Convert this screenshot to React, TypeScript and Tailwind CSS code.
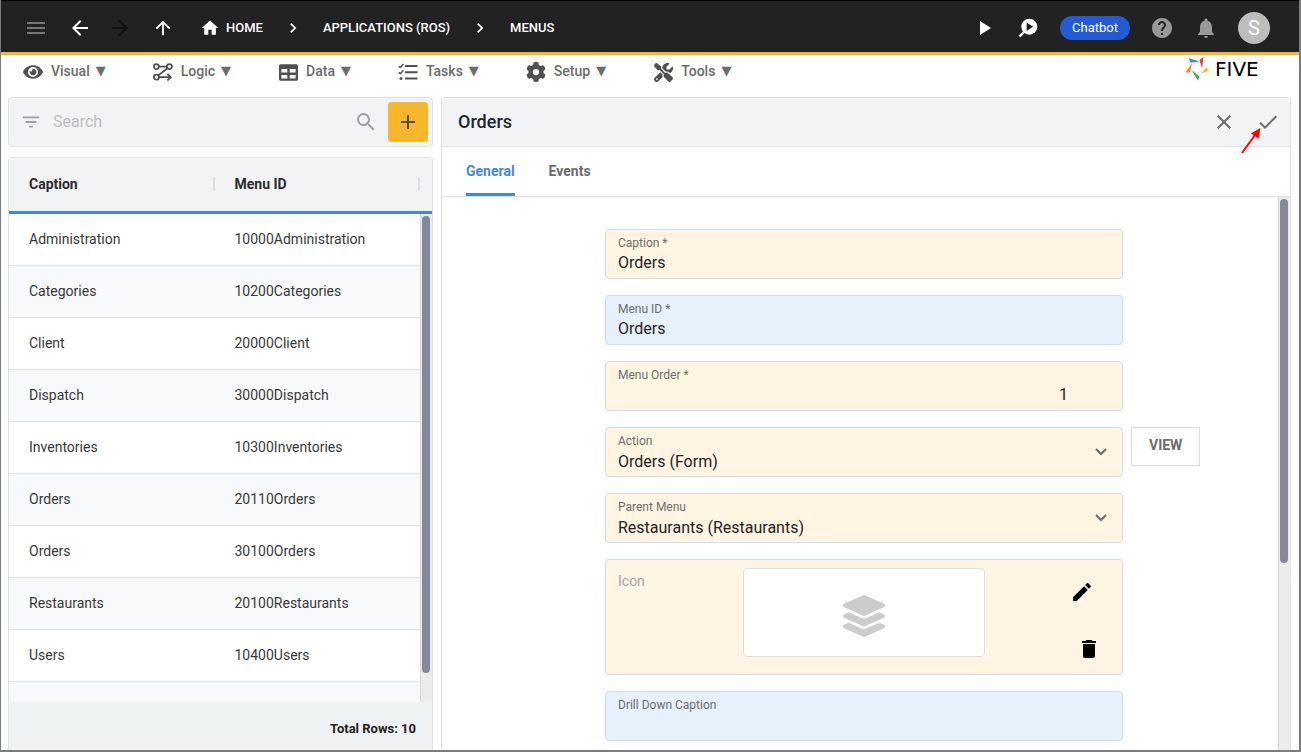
import React, { useState } from "react";
import {
  MdAdd,
  MdArrowBack,
  MdArrowForward,
  MdArrowUpward,
  MdCheck,
  MdChevronRight,
  MdClose,
  MdDelete,
  MdEdit,
  MdFilterList,
  MdHelp,
  MdHome,
  MdMenu,
  MdNotifications,
  MdPlayArrow,
  MdSearch,
} from "react-icons/md";
import { FaEye, FaLayerGroup, FaTable } from "react-icons/fa";
import { FaGear, FaScrewdriverWrench } from "react-icons/fa6";

const LogicIcon = () => (
  <svg
    viewBox="0 0 20 18"
    className="h-[18px] w-5"
    fill="none"
    stroke="currentColor"
    strokeWidth="1.8"
  >
    <circle cx="3.4" cy="3.6" r="2.5" />
    <circle cx="16.4" cy="3.6" r="2.5" />
    <circle cx="3.4" cy="14.2" r="2.5" />
    <path d="M6 3.600h8M14.400 5.300L5.400 12.400M6 14.200h11.500M14.400 11l3.400 3.200-3.400 3.200" />
  </svg>
);

const TasksIcon = () => (
  <svg
    viewBox="0 0 20 18"
    className="h-[18px] w-5"
    fill="none"
    stroke="currentColor"
  >
    <path d="M7 3h12.500M7 9.200h12.500M7 15.400h12.500" strokeWidth="2" />
    <path d="M.8 3l1.500 1.500L5.400 1M.8 9.200l1.500 1.500 3.100-3.500" strokeWidth="1.5" />
    <circle cx="3" cy="15.4" r="1.5" fill="currentColor" stroke="none" />
  </svg>
);

const DebugIcon = () => (
  <svg viewBox="0 0 20 20" className="size-5">
    <path d="M6.5 13.5L1.5 18.5" stroke="#fff" strokeWidth="2.4" />
    <circle cx="11.3" cy="8.7" r="8" fill="#fff" />
    <path d="M8.6 4.4v8.6l6.6-4.3z" fill="#222" />
  </svg>
);

const SelectArrow = () => (
  <svg
    viewBox="0 0 12 8"
    className="pointer-events-none absolute top-5 right-[15px] h-2 w-3"
    fill="none"
    stroke="#6b6b6b"
    strokeWidth="2"
  >
    <path d="M1 1l5 5 5-5" />
  </svg>
);

const menus = [
  { label: "Visual", icon: <FaEye size={20} /> },
  { label: "Logic", icon: <LogicIcon /> },
  { label: "Data", icon: <FaTable size={19} /> },
  { label: "Tasks", icon: <TasksIcon /> },
  { label: "Setup", icon: <FaGear size={20} /> },
  { label: "Tools", icon: <FaScrewdriverWrench size={19} /> },
];

const rows = [
  ["Administration", "10000Administration"],
  ["Categories", "10200Categories"],
  ["Client", "20000Client"],
  ["Dispatch", "30000Dispatch"],
  ["Inventories", "10300Inventories"],
  ["Orders", "20110Orders"],
  ["Orders", "30100Orders"],
  ["Restaurants", "20100Restaurants"],
  ["Users", "10400Users"],
  ["", ""],
];

const tabs = ["General", "Events"];

function Header() {
  return (
    <header className="flex h-[55px] shrink-0 items-center justify-between border-t border-b-3 border-t-black border-b-[#fbb829] bg-[#222] pt-0.5 pr-[29px] pl-[23px] text-[13px] font-medium text-white">
      <nav className="flex items-center">
        <button aria-label="Menu" className="text-[#757575]">
          <MdMenu size={24} />
        </button>
        <button aria-label="Back" className="ml-5">
          <MdArrowBack size={24} />
        </button>
        <button aria-label="Forward" className="ml-4 text-[#111]">
          <MdArrowForward size={24} />
        </button>
        <button aria-label="Up" className="ml-5">
          <MdArrowUpward size={22} />
        </button>
        <a href="#" className="ml-[26px] flex items-center gap-1.5">
          <MdHome size={20} />
          HOME
        </a>
        <MdChevronRight size={20} className="mx-5" />
        <a href="#">APPLICATIONS (ROS)</a>
        <MdChevronRight size={20} className="mx-5" />
        <a href="#">MENUS</a>
      </nav>
      <div className="flex items-center">
        <button aria-label="Run">
          <MdPlayArrow size={24} />
        </button>
        <button aria-label="Debug" className="ml-[22px]">
          <DebugIcon />
        </button>
        <button className="ml-[22px] h-6 rounded-full bg-[#235bd2] px-3 text-[13px] font-normal">
          Chatbot
        </button>
        <button aria-label="Help" className="ml-5 text-[#999]">
          <MdHelp size={24} />
        </button>
        <button aria-label="Notifications" className="ml-5 text-[#999]">
          <MdNotifications size={24} />
        </button>
        <button className="ml-5 size-8 rounded-full bg-[#bdbdbd] text-xl font-normal">
          S
        </button>
      </div>
    </header>
  );
}

function Logo() {
  return (
    <a href="#" className="flex w-22 items-center gap-1.5 pt-0.5 text-black">
      <svg viewBox="0 0 24 24" className="size-6 shrink-0">
        <path d="M4 1l1 4.500 10-.5z" fill="#3f84e0" />
        <path d="M18.500 0l-4 3 2.500 8.500z" fill="#e23a3a" />
        <path d="M15.500 17l8.500-3.500-2.500-3z" fill="#fbb829" />
        <path d="M6.500 13l6.500 10.500 1.500-4z" fill="#35a853" />
        <path d="M7 6L.5 15.500h4.500z" fill="#f58232" />
      </svg>
      <span className="font-['DejaVu_Sans'] text-xl leading-none">FIVE</span>
    </a>
  );
}

function MenuBar() {
  return (
    <div className="flex h-[42px] shrink-0 items-start justify-between pr-[26px] pl-[22px]">
      <nav className="flex gap-[47px] pt-1 text-sm font-medium text-[#6b6b6b]">
        {menus.map((menu) => (
          <button key={menu.label} className="flex items-center gap-2">
            <span className="flex h-6 w-5 items-center justify-center pt-0.5 text-[#505050]">
              {menu.icon}
            </span>
            <span className="flex items-center gap-1.5">
              {menu.label}
              <span className="font-['DejaVu_Sans'] text-[13px] leading-5">▼</span>
            </span>
          </button>
        ))}
      </nav>
      <Logo />
    </div>
  );
}

function SearchBar() {
  return (
    <div className="flex h-[50px] shrink-0 items-center rounded border border-[#dfe1e3] bg-[#f1f3f5] pr-1 pl-[11px]">
      <button aria-label="Filter" className="text-[#9aa1a8]">
        <MdFilterList size={22} />
      </button>
      <input
        aria-label="Search"
        placeholder="Search"
        className="ml-[11px] min-w-0 flex-1 bg-transparent text-base outline-none placeholder:text-[#bcbfc2]"
      />
      <button aria-label="Run search" className="mr-2.5 text-[#9aa1a8]">
        <MdSearch size={24} />
      </button>
      <button
        aria-label="Add"
        className="flex size-10 items-center justify-center rounded bg-[#f8b72b] text-[#505050]"
      >
        <MdAdd size={24} />
      </button>
    </div>
  );
}

function MenuTable() {
  return (
    <section className="flex min-h-0 flex-1 flex-col rounded-t border border-b-0 border-[#dfe1e3] bg-white">
      <div className="relative min-h-0 flex-1 overflow-hidden">
        <table className="w-full table-fixed border-separate border-spacing-0 text-left text-sm text-[#383838]">
          <colgroup>
            <col />
            <col />
            <col className="w-3" />
          </colgroup>
          <thead className="bg-[#f1f3f5]">
            <tr className="h-14">
              {["Caption", "Menu ID"].map((name) => (
                <th
                  key={name}
                  className="border-b-3 border-[#4387da] p-0 pb-0.5 font-bold text-[#2b2b2b]"
                >
                  <div className="flex items-center justify-between pl-5">
                    {name}
                    <span className="h-3.5 w-0.5 bg-[#dcdfe1]" />
                  </div>
                </th>
              ))}
              <th className="border-b-3 border-[#4387da] p-0" />
            </tr>
          </thead>
          <tbody>
            {rows.map(([caption, id], i) => (
              <tr key={i} className="h-13 odd:bg-white even:bg-[#f8f9fb]">
                <td className="border-b border-[#e2e5e8] p-0 pb-0.5 pl-5">{caption}</td>
                <td className="border-b border-[#e2e5e8] p-0 pb-0.5 pl-5">{id}</td>
                <td className="border-b border-[#e2e5e8] p-0" />
              </tr>
            ))}
          </tbody>
        </table>
        <div className="absolute top-14 right-0 bottom-0 w-3 border-l border-[#d5d5d5] bg-[#ebebeb] pt-0.5 pr-0.5 pl-px">
          <div className="h-[94%] rounded-full bg-[#828a9a]" />
        </div>
      </div>
      <footer className="flex h-12 shrink-0 items-center justify-end bg-[#eef2f3] pt-1.5 pr-4 text-[13px] font-bold text-[#222]">
        Total Rows: 10
      </footer>
    </section>
  );
}

type FieldProps = {
  id: string;
  label: string;
  tone: string;
  children?: React.ReactNode;
};

function Field({ id, label, tone, children }: FieldProps) {
  return (
    <div
      className={`relative col-start-2 flex h-[50px] flex-col rounded border border-[#cddcea] pt-[5px] ${tone}`}
    >
      <label htmlFor={id} className="px-3 text-xs leading-4 text-[#6d6d6d]">
        {label}
      </label>
      {children}
    </div>
  );
}

const cream = "bg-[#fff5e2]";
const blue = "bg-[#e6f1fc]";
const control =
  "w-full min-w-0 appearance-none bg-transparent px-3 text-base text-[#222] outline-none";

function Details() {
  const [tab, setTab] = useState("General");

  return (
    <section className="flex min-w-0 flex-1 flex-col rounded-t border border-b-0 border-[#dfe1e3] bg-white">
      <div className="flex h-[49px] shrink-0 items-center justify-between border-b border-[#dfe1e3] bg-[#f1f3f5] px-2.5 pl-4 text-[#6b6b6b]">
        <h1 className="text-lg font-medium text-[#1d2533]">Orders</h1>
        <div className="flex items-center gap-5">
          <button aria-label="Cancel">
            <MdClose size={24} />
          </button>
          <button aria-label="Save" className="relative">
            <MdCheck size={24} />
            <svg
              viewBox="0 0 22 28"
              className="absolute top-4 -left-4 h-7 w-[22px]"
            >
              <path d="M2 27L15 9" stroke="#f00" strokeWidth="2" />
              <path d="M20.500 2L11 7.500l7.500 5z" fill="#f00" />
            </svg>
          </button>
        </div>
      </div>
      <div className="flex h-[50px] shrink-0 gap-[34px] border-b border-[#dfe1e3] px-6 text-sm font-bold">
        {tabs.map((name) => (
          <button
            key={name}
            onClick={() => setTab(name)}
            className={`border-b-3 pt-0.5 ${
              tab === name
                ? "border-[#4387da] text-[#4387da]"
                : "border-transparent text-[#6b6b6b]"
            }`}
          >
            {name}
          </button>
        ))}
      </div>
      <div className="flex min-h-0 flex-1">
        <form className="grid min-w-0 flex-1 grid-cols-[155fr_518fr_147fr] content-start gap-x-2 gap-y-4 overflow-hidden pt-8">
          <Field id="caption" label="Caption *" tone={cream}>
            <input
              id="caption"
              defaultValue="Orders"
              className={`${control} leading-6`}
            />
          </Field>
          <Field id="menu-id" label="Menu ID *" tone={blue}>
            <input
              id="menu-id"
              defaultValue="Orders"
              className={`${control} leading-6`}
            />
          </Field>
          <Field id="order" label="Menu Order *" tone={cream}>
            <input
              id="order"
              defaultValue="1"
              className={`${control} pr-[54px] text-right leading-6`}
            />
          </Field>
          <Field id="action" label="Action" tone={cream}>
            <select id="action" className={`${control} leading-[26px]`}>
              <option>Orders (Form)</option>
            </select>
            <SelectArrow />
          </Field>
          <button
            type="button"
            className="h-[39px] self-start justify-self-start border border-[#dcdfe1] px-[17px] pb-1 text-sm font-bold text-[#6b6b6b]"
          >
            VIEW
          </button>
          <Field id="parent" label="Parent Menu" tone={cream}>
            <select id="parent" className={`${control} leading-[26px]`}>
              <option>Restaurants (Restaurants)</option>
            </select>
            <SelectArrow />
          </Field>
          <div className="col-start-2 grid h-29 grid-cols-[1fr_242px_1fr] rounded border border-[#cddcea] bg-[#fff5e2] pt-2">
            <span className="pl-3 text-sm leading-[26px] text-[#a5a39d]">Icon</span>
            <div className="flex h-[89px] items-center justify-center rounded border border-[#dcdfe1] bg-white pt-1.5 text-[#ccc]">
              <FaLayerGroup size={42} />
            </div>
            <div className="flex flex-col items-end justify-between pt-3 pr-[21px] pb-[13px] text-black">
              <button type="button" aria-label="Edit icon" className="mr-[7px]">
                <MdEdit size={24} />
              </button>
              <button type="button" aria-label="Delete icon">
                <MdDelete size={24} />
              </button>
            </div>
          </div>
          <Field id="drill" label="Drill Down Caption" tone={blue}>
            <input id="drill" className={`${control} leading-6`} />
          </Field>
        </form>
        <div className="w-3 border-l border-[#d5d5d5] bg-[#ebebeb] pt-0.5 pr-0.5 pl-px">
          <div className="h-[66%] rounded-full bg-[#828a9a]" />
        </div>
      </div>
    </section>
  );
}

export default function App() {
  return (
    <div className="flex h-screen flex-col overflow-hidden border-r-2 border-b-2 border-l border-[#7c7c7c] bg-white font-[Roboto,sans-serif]">
      <Header />
      <MenuBar />
      <main className="flex min-h-0 flex-1 gap-2 pr-2 pl-[7px]">
        <div className="flex w-1/3 max-w-[425px] min-w-0 shrink-0 flex-col gap-2.5 lg:w-[425px]">
          <SearchBar />
          <MenuTable />
        </div>
        <Details />
      </main>
    </div>
  );
}
